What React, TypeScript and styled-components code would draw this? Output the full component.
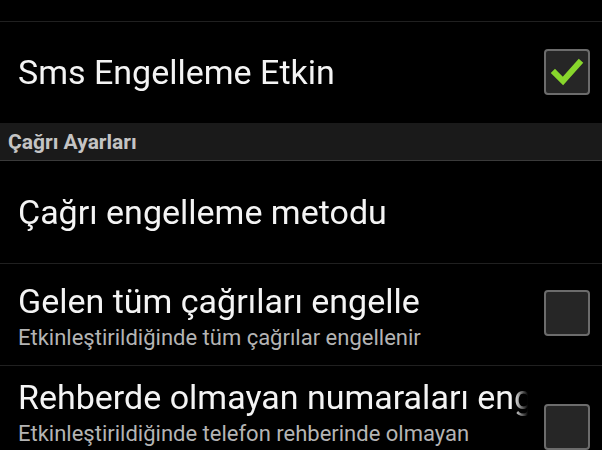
import React, { FC } from 'react';
import styled, { createGlobalStyle } from 'styled-components';

const GlobalStyle = createGlobalStyle`
  html, body {
    margin: 0;
    padding: 0;
    background: #000;
  }
  body {
    font-family: Roboto, "Noto Sans", "Liberation Sans", sans-serif;
    overflow: hidden;
  }
`;

const Screen = styled.div`
  width: 602px;
  height: 450px;
  overflow: hidden;
  background: #000;
  display: flex;
  flex-direction: column;
`;

const TopEdge = styled.div`
  height: 22px;
  flex-shrink: 0;
  box-sizing: border-box;
  border-bottom: 1px solid #202020;
`;

const Row = styled.div<{ $height: number; $pad?: number; $plain?: boolean }>`
  height: ${(p) => p.$height}px;
  flex-shrink: 0;
  box-sizing: border-box;
  display: flex;
  align-items: ${(p) => (p.$pad ? 'flex-start' : 'center')};
  padding: ${(p) => (p.$pad ? `${p.$pad}px 0 0 18px` : '0 0 0 18px')};
  border-bottom: 1px solid ${(p) => (p.$plain ? 'transparent' : '#202020')};
`;

const TextCol = styled.div`
  flex: 1;
  min-width: 0;
  display: flex;
  flex-direction: column;
  overflow: hidden;
`;

const Title = styled.div`
  font-size: 34px;
  line-height: 40px;
  color: #f4f4f4;
  white-space: nowrap;
  overflow: hidden;
  -webkit-mask-image: linear-gradient(to right, #000 calc(100% - 14px), transparent);
  mask-image: linear-gradient(to right, #000 calc(100% - 14px), transparent);
`;

const Summary = styled.div`
  font-size: 22px;
  line-height: 28px;
  color: #b4b4b4;
  margin-top: 3px;
`;

const Header = styled.div`
  height: 38px;
  flex-shrink: 0;
  box-sizing: border-box;
  background: #1a1a1a;
  border-bottom: 1px solid #3a3a3a;
  display: flex;
  align-items: center;
  padding-left: 8px;
  font-size: 21px;
  font-weight: 700;
  color: #c4c4c4;
`;

const Box = styled.div<{ $top?: number }>`
  width: 42px;
  height: 42px;
  flex-shrink: 0;
  margin: ${(p) => (p.$top ? `${p.$top}px 12px 0 16px` : '0 12px 0 16px')};
  border: 2px solid #6c6c6c;
  border-radius: 4px;
  background: #262626;
  display: flex;
  align-items: center;
  justify-content: center;
`;

const CheckBox: FC<{ checked?: boolean; top?: number }> = ({ checked, top }) => (
  <Box $top={top}>
    {checked && (
      <svg width="34" height="30" viewBox="0 0 34 30">
        <path
          d="M5 16 L13 24 L29 6"
          fill="none"
          stroke="#88d62c"
          strokeWidth="6"
          strokeLinecap="square"
        />
      </svg>
    )}
  </Box>
);

const App: FC = () => {
  return (
    <Screen>
      <GlobalStyle />
      <TopEdge />

      <Row $height={101} $plain>
        <TextCol>
          <Title>Sms Engelleme Etkin</Title>
        </TextCol>
        <CheckBox checked />
      </Row>

      <Header>Çağrı Ayarları</Header>

      <Row $height={103}>
        <TextCol>
          <Title>Çağrı engelleme metodu</Title>
        </TextCol>
      </Row>

      <Row $height={102} $pad={17}>
        <TextCol>
          <Title>Gelen tüm çağrıları engelle</Title>
          <Summary>Etkinleştirildiğinde tüm çağrılar engellenir</Summary>
        </TextCol>
        <CheckBox top={9} />
      </Row>

      <Row $height={130} $pad={11}>
        <TextCol>
          <Title>Rehberde olmayan numaraları engelle</Title>
          <Summary>
            Etkinleştirildiğinde telefon rehberinde olmayan
            <br />
            numaraları engeller
          </Summary>
        </TextCol>
        <CheckBox top={27} />
      </Row>
    </Screen>
  );
};

export default App;
